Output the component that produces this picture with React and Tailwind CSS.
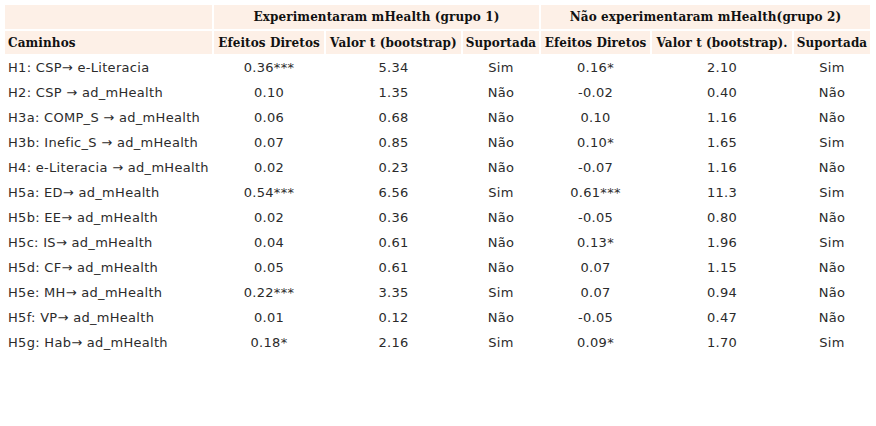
import React from "react";

const rows = [
  ["H1: CSP→ e-Literacia", "0.36***", "5.34", "Sim", "0.16*", "2.10", "Sim"],
  ["H2: CSP → ad_mHealth", "0.10", "1.35", "Não", "-0.02", "0.40", "Não"],
  ["H3a: COMP_S → ad_mHealth", "0.06", "0.68", "Não", "0.10", "1.16", "Não"],
  ["H3b: Inefic_S → ad_mHealth", "0.07", "0.85", "Não", "0.10*", "1.65", "Sim"],
  ["H4: e-Literacia → ad_mHealth", "0.02", "0.23", "Não", "-0.07", "1.16", "Não"],
  ["H5a: ED→ ad_mHealth", "0.54***", "6.56", "Sim", "0.61***", "11.3", "Sim"],
  ["H5b: EE→ ad_mHealth", "0.02", "0.36", "Não", "-0.05", "0.80", "Não"],
  ["H5c: IS→ ad_mHealth", "0.04", "0.61", "Não", "0.13*", "1.96", "Sim"],
  ["H5d: CF→ ad_mHealth", "0.05", "0.61", "Não", "0.07", "1.15", "Não"],
  ["H5e: MH→ ad_mHealth", "0.22***", "3.35", "Sim", "0.07", "0.94", "Não"],
  ["H5f: VP→ ad_mHealth", "0.01", "0.12", "Não", "-0.05", "0.47", "Não"],
  ["H5g: Hab→ ad_mHealth", "0.18*", "2.16", "Sim", "0.09*", "1.70", "Sim"],
];

const App = () => {
  return (
    <div className="w-[876px] h-[426px] bg-white p-[3px]">
      <table className="table-fixed border-separate border-spacing-[2px] w-[869px] text-[#111]">
        <colgroup>
          <col className="w-[207px]" />
          <col className="w-[110px]" />
          <col className="w-[135px]" />
          <col className="w-[76px]" />
          <col className="w-[109px]" />
          <col className="w-[140px]" />
          <col className="w-[76px]" />
        </colgroup>
        <thead className="font-['DejaVu_Serif',serif] font-bold text-[12px] tracking-[0.1px]">
          <tr className="h-[24px]">
            <th className="bg-[#fdf0e7]"></th>
            <th colSpan={3} className="bg-[#fdf0e7] text-center font-bold">
              Experimentaram mHealth (grupo 1)
            </th>
            <th colSpan={3} className="bg-[#fdf0e7] text-center font-bold">
              Não experimentaram mHealth(grupo 2)
            </th>
          </tr>
          <tr className="h-[23px]">
            <th className="bg-[#fdf0e7] text-left px-[3px]">Caminhos</th>
            <th className="bg-[#fdf0e7] text-center whitespace-nowrap px-0">Efeitos Diretos</th>
            <th className="bg-[#fdf0e7] text-center whitespace-nowrap px-0">Valor t (bootstrap)</th>
            <th className="bg-[#fdf0e7] text-center whitespace-nowrap px-0">Suportada</th>
            <th className="bg-[#fdf0e7] text-center whitespace-nowrap px-0">Efeitos Diretos</th>
            <th className="bg-[#fdf0e7] text-center whitespace-nowrap px-0">Valor t (bootstrap).</th>
            <th className="bg-[#fdf0e7] text-center whitespace-nowrap px-0">Suportada</th>
          </tr>
        </thead>
        <tbody className="font-['DejaVu_Sans',sans-serif] font-normal text-[13px] tracking-[0.3px] text-[#2b2b2b]">
          {rows.map((r) => (
            <tr key={r[0]} className="h-[23px]">
              <td className="text-left px-[3px] whitespace-nowrap">{r[0]}</td>
              {r.slice(1).map((v, i) => (
                <td key={i} className="text-center">
                  {v}
                </td>
              ))}
            </tr>
          ))}
        </tbody>
      </table>
    </div>
  );
};

export default App;
